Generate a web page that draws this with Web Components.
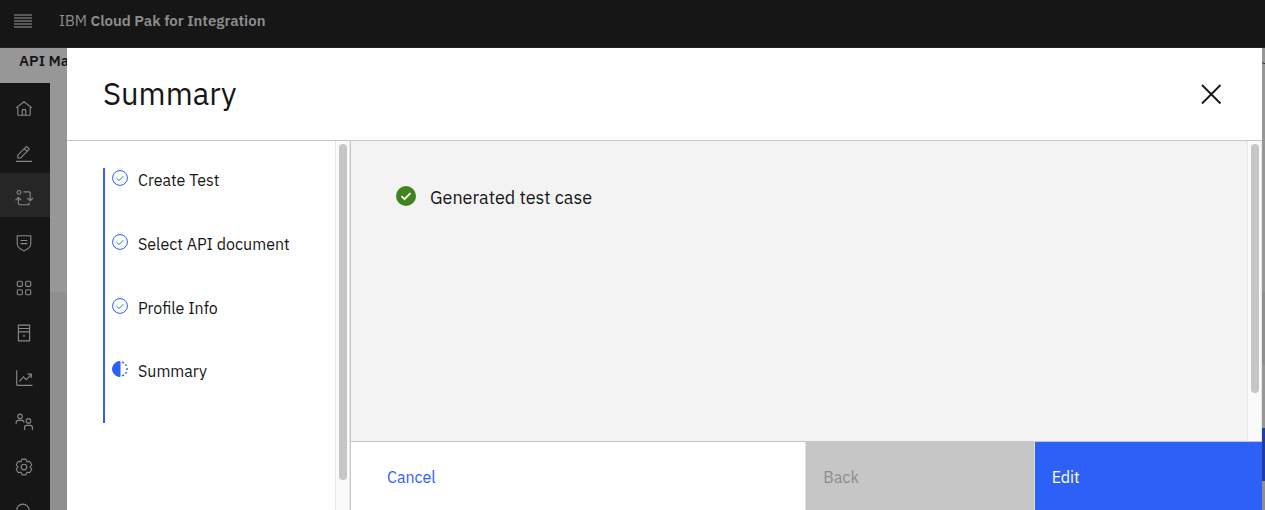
<!DOCTYPE html>
<html lang="en">
<head>
<meta charset="utf-8">
<title>IBM Cloud Pak for Integration</title>
<style>
html, body { height: 100%; }
body { margin: 0; overflow: hidden; font: 15px/20px "IBM Plex Sans", "Noto Sans", sans-serif; color: #161616; }
</style>
</head>
<body>
<app-shell>
  <app-header slot="header"></app-header>
  <product-bar slot="product">API Manager</product-bar>
  <nav-rail slot="nav"></nav-rail>
  <page-backdrop slot="main"></page-backdrop>
  <wizard-dialog slot="dialog" heading="Summary">
    <step-list slot="steps">
      <step-item state="complete">Create Test</step-item>
      <step-item state="complete">Select API document</step-item>
      <step-item state="complete">Profile Info</step-item>
      <step-item state="current">Summary</step-item>
    </step-list>
    <status-line slot="body">Generated test case</status-line>
    <dialog-button slot="actions" kind="ghost">Cancel</dialog-button>
    <dialog-button slot="actions" kind="disabled">Back</dialog-button>
    <dialog-button slot="actions" kind="primary">Edit</dialog-button>
  </wizard-dialog>
</app-shell>

<script>
const define = (name, render) => customElements.define(name, class extends HTMLElement {
  constructor() { super(); this.attachShadow({ mode: "open" }); }
  connectedCallback() { this.shadowRoot.innerHTML = render(this); }
});

define("app-shell", () => `
<style>
:host { display: grid; height: 100vh; position: relative; overflow: hidden; background: #979797;
  grid-template: 48px 35px minmax(0, 1fr) / 50px minmax(0, 1fr); }
::slotted([slot=header]), ::slotted([slot=product]) { grid-column: 1 / -1; }
::slotted([slot=dialog]) { position: absolute; top: 48px; right: 3px; bottom: 0; left: 67px; }
</style>
<slot name="header"></slot><slot name="product"></slot><slot name="nav"></slot><slot name="main"></slot><slot name="dialog"></slot>`);

define("app-header", () => `
<style>
:host { display: flex; align-items: flex-start; gap: 27px; box-sizing: border-box; padding: 11px 14px 0; background: #161616; color: #8e8e8e; border-bottom: 1px solid #261f21; }
button { display: flex; padding: 2px 0; border: 0; background: none; color: #6f6f6f; }
a { color: inherit; text-decoration: none; }
b { font-weight: 600; }
</style>
<button aria-label="Menu"><svg width="18" height="16" fill="none" stroke="currentColor" stroke-width="2"><path d="M0 2h18M0 5h18M0 8h18M0 11h18M0 14h18" stroke-width="1.600"/></svg></button>
<a href="#">IBM <b>Cloud Pak for Integration</b></a>`);

define("product-bar", () => `
<style>
:host { display: flex; align-items: flex-start; justify-content: space-between; padding: 3px 0 0 19px; background: #979797; font-weight: 600; }
svg { margin-top: 10px; }
</style>
<slot></slot><svg width="3" height="4" fill="none" stroke="#333"><path d="M0 1.5l2 1h1"/></svg>`);

const gear = "M27,16.8V15.2l1.9-1.7A2,2,0,0,0,29.3,11L26.9,7a2,2,0,0,0-2.3-.9l-2.5.8a11,11,0,0,0-1.3-.75l-.5-2.5a2,2,0,0,0-2-1.6H13.6a2,2,0,0,0-2,1.6l-.5,2.5a11,11,0,0,0-1.3.75L7.4,6.1A2,2,0,0,0,5.1,7L2.7,11a2,2,0,0,0,.4,2.5L5,15.2v1.6L3.1,18.5A2,2,0,0,0,2.7,21L5.1,25a2,2,0,0,0,2.3.9l2.500-.8a11,11,0,0,0,1.300.750l.5,2.500a2,2,0,0,0,2,1.600h4.700a2,2,0,0,0,2-1.600l.5-2.500a11,11,0,0,0,1.300-.750l2.400.8a2,2,0,0,0,2.300-.9L29.3,21a2,2,0,0,0-.4-2.500Z";
const navIcons = [
  ["Home", `<path d="M2 14L16 3l14 11M5 12v14a1 1 0 0 0 1 1h20a1 1 0 0 0 1-1V12M13 27V18a1 1 0 0 1 1-1h4a1 1 0 0 1 1 1v9"/>`],
  ["Develop", `<path d="M2 29H30M5 23v-5L19.7 3.3a1.2 1.2 0 0 1 1.7 0l3.3 3.3a1.2 1.2 0 0 1 0 1.7L10 23ZM16.5 6.5l5 5"/>`],
  ["Test", `<circle cx="7" cy="6" r="3.3"/><path d="M15 5h10a2 2 0 0 1 2 2v13M22 16l5 5 5-5M6 15v11a2 2 0 0 0 2 2h17v-4M1 20L6 15l5 5"/>`],
  ["Manage", `<path d="M4 3h24v14a11 11 0 0 1-6 9.500l-6 3.500-6-3.500a11 11 0 0 1-6-9.500ZM10 11.500h12M10 17h12"/>`],
  ["Catalogs", `<rect x="4" y="4" width="9" height="9" rx="2"/><rect x="19" y="4" width="9" height="9" rx="2"/><rect x="4" y="19" width="9" height="9" rx="2"/><rect x="19" y="19" width="9" height="9" rx="2"/>`],
  ["Resources", `<path d="M6 2h20v28H6ZM6 8h20M6 14h20M14 21h4"/>`],
  ["Analytics", `<path d="M3 2v26a1 1 0 0 0 1 1h27M8 22l7-8 5 5L29 10M22 9h7v7"/>`],
  ["Members", `<circle cx="9" cy="6" r="4"/><circle cx="24" cy="14" r="4"/><path d="M2 20v-3a4 4 0 0 1 4-4h6a4 4 0 0 1 4 4M17 30v-4a4 4 0 0 1 4-4h6a4 4 0 0 1 4 4v4"/>`],
  ["Settings", `<path d="${gear}"/><circle cx="16" cy="16" r="5"/>`],
  ["Search", `<circle cx="14" cy="13" r="11"/><path d="M22 22l8 8"/>`],
];
define("nav-rail", () => `
<style>
:host { display: block; background: #161616; overflow: hidden; }
nav { display: grid; grid-auto-rows: 1fr; height: 448px; }
a { display: flex; padding: 7px 0 0 15px; align-items: center; color: #888; }
a[aria-current] { background: #262626; }
svg { width: 18px; height: 18px; fill: none; stroke: currentColor; stroke-width: 2; overflow: visible; }
</style>
<nav>${navIcons.map(([label, art], i) => `<a href="#" aria-label="${label}"${i === 2 ? ' aria-current="page"' : ""}><svg viewBox="0 0 32 32">${art}</svg></a>`).join("")}</nav>`);

define("page-backdrop", () => `
<style>
:host { display: grid; grid-template-rows: 209px 73px 63px 53px 1fr; background: #8f8f8f; }
.top { background: #979797; }
.card { background: linear-gradient(90deg, #8f8f8f 50%, #979797 50%); }
.action { margin-left: 90%; background: #1f409f; }
</style>
<div class="top"></div><div></div><div class="card"></div><div class="action"></div><div></div>`);

define("wizard-dialog", el => `
<style>
:host { display: grid; grid-template: 93px minmax(0, 1fr) / 284px minmax(0, 1fr); background: #fff; }
header { grid-column: 1 / -1; display: flex; align-items: center; justify-content: space-between; padding: 0 35px 0 36px; border-bottom: 1px solid #c6c6c6; }
h2 { margin: 0; font-size: 31px; line-height: 40px; font-weight: 400; }
header button { display: flex; padding: 0; border: 0; background: none; color: #161616; }
aside { display: flex; justify-content: space-between; border-right: 1px solid #c6c6c6; }
section { display: grid; grid-template-rows: 300px minmax(68px, 1fr); }
.body { display: flex; justify-content: space-between; background: #f3f3f3; }
footer { display: grid; grid-template-columns: 199fr 100fr 100fr; border-top: 1px solid #c6c6c6; }
</style>
<header><h2>${el.getAttribute("heading")}</h2>
<button aria-label="Close"><svg width="32" height="32" fill="none" stroke="currentColor" stroke-width="1.800"><path d="M7 7l18.500 18.500M25.500 7l-18.500 18.500"/></svg></button></header>
<aside><slot name="steps"></slot><scroll-track size="336"></scroll-track></aside>
<section>
  <div class="body"><slot name="body"></slot><scroll-track size="249"></scroll-track></div>
  <footer><slot name="actions"></slot></footer>
</section>`);

define("scroll-track", el => `
<style>
:host { display: block; box-sizing: border-box; width: 15px; padding: 3px; background: #fafafa; border: solid #e8e8e8; border-width: 0 1px; }
div { width: 8px; height: ${el.getAttribute("size")}px; border-radius: 4px; background: #c6c6c6; }
</style><div></div>`);

define("step-list", () => `
<style>
:host { display: block; padding: 27px 0 0 36px; font-size: 16px; }
div { display: grid; grid-auto-rows: 1fr; height: 255px; border-left: 2px solid #2d60f6; }
</style><div role="list"><slot></slot></div>`);

const stepIcons = {
  complete: `<circle cx="8" cy="8" r="7.400"/><path d="M4.800 8.300l2.200 2.200 4.300-4.300"/>`,
  current: `<path d="M8 .500a7.500 7.500 0 0 0 0 15Z" fill="currentColor"/><path d="M10 1.200l2 .8M13.300 3.300l1.200 1.600M15 7v2M14.500 11.100l-1.200 1.600M12 14l-2 .8" stroke-width="1.400"/>`,
};
define("step-item", el => `
<style>
:host { display: flex; gap: 10px; padding-left: 7px; }
svg { margin-top: 2px; flex: none; color: #2d60f6; }
span { margin-top: 2px; }
</style>
<svg width="16" height="16" fill="none" stroke="currentColor">${stepIcons[el.getAttribute("state")]}</svg><span><slot></slot></span>`);

define("status-line", () => `
<style>
:host { display: flex; gap: 14px; padding: 45px 0 0 45px; font-size: 18px; line-height: 24px; }
</style>
<svg width="20" height="20" fill="none"><circle cx="10" cy="10" r="10" fill="#42831f"/><path d="M5.500 10.200l3 3 6-6" stroke="#fff" stroke-width="1.700"/></svg><span><slot></slot></span>`);

define("dialog-button", el => {
  const kind = el.getAttribute("kind");
  return `
<style>
:host { display: grid; font-size: 16px; }
button { border: 0; border-left: 1px solid #e0e0e0; border-radius: 0; margin: 0; padding: 1px 17px 0; font: inherit; text-align: left; }
.ghost { border: 0; padding: 1px 36px 0; background: #fff; color: #2d60f6; }
.disabled { background: #c6c6c6; color: #8d8d8d; }
.primary { background: #2d60f6; color: #fff; }
</style>
<button class="${kind}"${kind === "disabled" ? " disabled" : ""}><slot></slot></button>`;
});
</script>
</body>
</html>
